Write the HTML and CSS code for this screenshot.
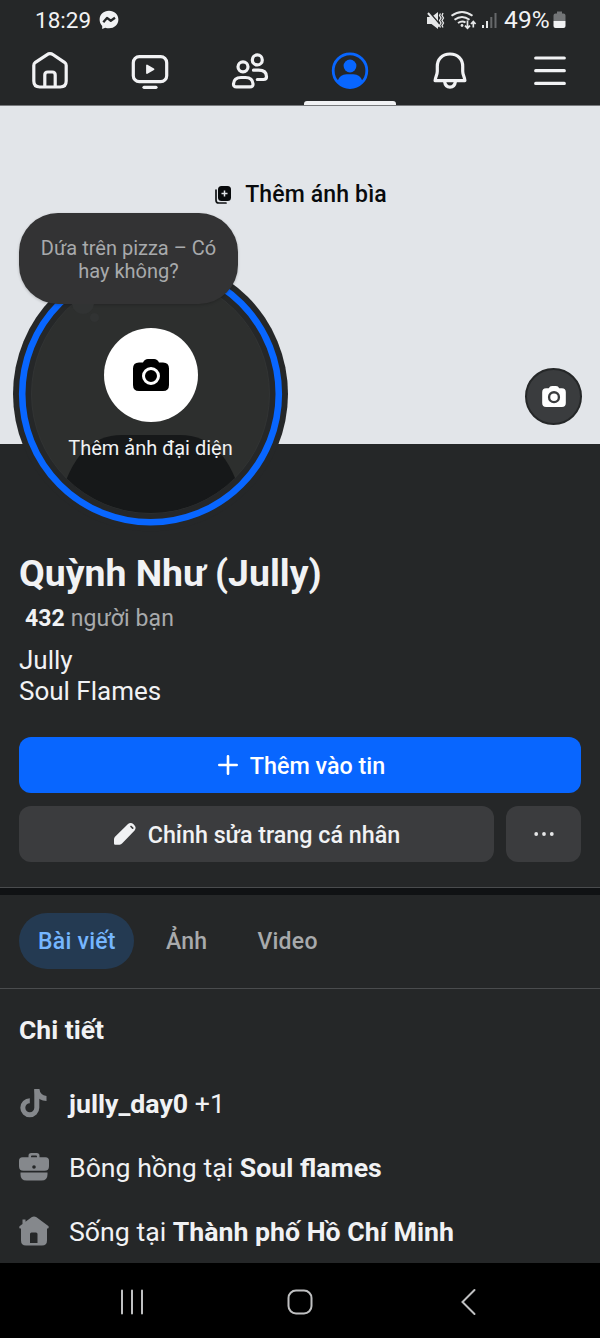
FILE: index.html
```html
<!DOCTYPE html>
<html lang="vi">
<head>
<meta charset="utf-8">
<title>Quỳnh Như (Jully)</title>
<link rel="stylesheet" href="styles.css">
</head>
<body>
<div class="app">
  <header class="top">
    <div class="status">
      <span class="clock">18:29</span>
      <svg class="messenger" width="20" height="20" viewBox="0 0 20 20"><path d="M10 .8C4.600.8.600 4.600.600 9.600c0 2.500.9 4.700 2.600 6.300V19l3-1.300c1.200.4 2.500.6 3.800.6 5.400 0 9.400-3.800 9.400-8.800S15.400.8 10 .8z" fill="#f1f2f4"/><path d="M4.300 12.200 8 7.900l3.800 2.800 4.200-3" fill="none" stroke="#252728" stroke-width="2.300" stroke-linejoin="round"/></svg>
      <span class="grow"></span>
      <svg class="sys" width="72" height="24" viewBox="424 8 72 24" fill="none" stroke="#e6e7e8">
        <path d="M425 17h4.500l6.500-5v17l-6.500-5H425z" fill="#e6e7e8" stroke="none"/>
        <path d="M427.500 12.500l10 11.500" stroke="#252728" stroke-width="1.800"/>
        <path d="M426 13l11.500 13.500" stroke-width="2"/>
        <path d="M438.500 13.500l-1 2 1.500 2.500-1.500 2.500 1.500 2.500-1.500 2.500 1 2M441 13l-1 2.500 1.500 2.500-1.500 2.500 1.500 2.500-1.500 2.500 1 2" stroke-width="1.300"/>
        <path d="M449.500 15.800q10.500-7.500 21 0M452.500 19.700q7.500-5.500 15 0M456 23q4-2.600 7.500-.5" stroke-width="2"/>
        <circle cx="460" cy="25.500" r="1.400" fill="#e6e7e8" stroke="none"/>
        <path d="M465.500 20.500v7.500m-2.500-2.300 2.500 2.500 2.500-2.500M471.300 27.500v-5.500m-2.300 2 2.300-2.500 2.300 2.500" stroke-width="1.700"/>
        <path d="M481 25v3M485 21v7" stroke-width="2"/><path d="M489.300 17v11M493.500 13v15" stroke="#66686a" stroke-width="2"/>
      </svg>
      <span class="percent">49%</span>
      <svg class="battery" width="13" height="18" viewBox="0 0 13 18"><path d="M4 .5h5v2h1.500q2 0 2 2V10H.5V4.500q0-2 2-2H4z" fill="#737577"/><path d="M.5 10h12v5q0 2-2 2h-8q-2 0-2-2z" fill="#f1f2f4"/></svg>
    </div>
    <nav class="nav">
      <a class="nav-item"><svg width="40" height="44" viewBox="30 49 40 44"><path d="M33.800 65.500q0-2 1.600-3.200L46.800 54.800q3.200-2.200 6.400 0L64.500 62.300q1.700 1.200 1.700 3.200V81q0 6-6 6H39.800q-6 0-6-6zM44.800 87V75q0-3 3-3h4.400q3 0 3 3v12"/></svg></a>
      <a class="nav-item"><svg width="40" height="44" viewBox="130 49 40 44"><rect x="133.300" y="56.700" width="33.400" height="25" rx="6"/><path d="M144 87.300h12"/><path d="M147 65.500v7.500l6.500-3.800z" fill="#f1f2f4" stroke-width="1.800"/></svg></a>
      <a class="nav-item"><svg width="40" height="44" viewBox="230 49 40 44"><circle cx="243" cy="66.800" r="5"/><circle cx="257.300" cy="59.900" r="5"/><path d="M241 77.500h4.500q7 0 7.500 6.300.2 3-3 3H236.500q-3.200 0-3-3Q234 77.500 241 77.500zM253.500 70.200h5q8 0 8 6.600 0 2.700-3 2.700h-6.200"/></svg></a>
      <a class="nav-item active"><svg width="40" height="44" viewBox="330 49 40 44"><circle cx="350" cy="70.700" r="16.800" class="blue-line"/><circle cx="350" cy="66" r="6.400" class="blue"/><path class="blue" d="M337.500 81q2.500-6.800 9-6.800h7q6.500 0 9 6.800-5 6.500-12.500 6.500T337.500 81z"/></svg></a>
      <a class="nav-item"><svg width="40" height="44" viewBox="430 49 40 44"><path d="M450 54c-8 0-12.700 5.300-12.700 12.300v5c0 3.500-2 6-2.200 9.300h29.800c-.2-3.300-2.200-5.800-2.200-9.300v-5C462.700 59.300 458 54 450 54z"/><path d="M444.500 81q.8 6.200 5.500 6.200t5.500-6.200"/></svg></a>
      <a class="nav-item"><svg width="40" height="44" viewBox="530 49 40 44"><path d="M535.700 58h28.600M535.700 70.700h28.600M535.700 83.400h28.600"/></svg></a>
    </nav>
  </header>

  <main class="profile">
    <section class="cover">
      <div class="add-cover">
        <svg width="18" height="20" viewBox="0 0 18 20"><path d="M2 5v10.200Q2 18 4.800 18H12" fill="none" stroke="#101214" stroke-width="1.700" stroke-linecap="round"/><rect x="4" y="1" width="13" height="15" rx="3.500" fill="#080a0c"/><path d="M10.500 5.500v6M7.500 8.500h6" stroke="#e2e5e9" stroke-width="1.500"/></svg>
        <span>Thêm ánh bìa</span>
      </div>
      <div class="cover-camera"><svg width="24" height="21" viewBox="0 0 36 32"><path fill="#fff" d="M10 3.500Q11.500 0 15 0h6q3.500 0 5 3.500h4q6 0 6 6V26q0 6-6 6H6q-6 0-6-6V9.500q0-6 6-6z"/><circle cx="18" cy="17" r="7.500" fill="#fff" stroke="#3a3c3e" stroke-width="3.600"/></svg></div>
      <div class="avatar">
        <svg class="ring" width="276" height="276" viewBox="12 256 276 276">
          <defs><clipPath id="photo"><circle cx="150.500" cy="394" r="119"/></clipPath></defs>
          <circle cx="150.500" cy="394" r="137.500" fill="#252728"/>
          <circle cx="150.500" cy="394" r="128.300" fill="none" stroke="#0866ff" stroke-width="6.600"/>
          <circle cx="150.500" cy="394" r="119" fill="#2d2f2e" stroke="#343636" stroke-width=".8"/>
          <path clip-path="url(#photo)" d="M60 500Q76 435 122 435h58q46 0 62 65v20H60z" fill="#161819"/>
        </svg>
        <div class="avatar-content">
          <div class="avatar-camera"><svg width="36" height="32" viewBox="0 0 36 32"><path d="M10 3.500Q11.500 0 15 0h6q3.500 0 5 3.500h4q6 0 6 6V26q0 6-6 6H6q-6 0-6-6V9.500q0-6 6-6z"/><circle cx="18" cy="17" r="7.500" fill="#000" stroke="#fff" stroke-width="3"/></svg></div>
          <span class="avatar-label">Thêm ảnh đại diện</span>
        </div>
      </div>
      <div class="bubble"><span class="l1">Dứa trên pizza – Có</span><span class="l2">hay không?</span><i class="dot big"></i><i class="dot small"></i></div>
    </section>

    <section class="info">
      <h1 class="name"><span>Quỳnh Như (Jully)</span></h1>
      <p class="friends"><b>432</b> <span>người bạn</span></p>
      <p class="bio"><span>Jully</span><br><span>Soul Flames</span></p>
      <div class="actions">
        <div class="btn primary"><svg width="20" height="20" viewBox="0 0 20 20"><path d="M10 1.300v17.400M1.300 10h17.400" stroke="#fff" stroke-width="2.600" stroke-linecap="round"/></svg><span>Thêm vào tin</span></div>
        <div class="row">
          <div class="btn edit"><svg width="24" height="24" viewBox="0 0 24 24"><path fill="#f1f2f4" d="M1 21.500V17.200q0-1.500 1-2.500L15 2q2.700-2.200 5.800.4 3.200 3 .8 6L9.300 21.300q-1.200 1.400-2.700 1.400H2.200Q1 22.700 1 21.500z"/><path d="M18 4.500l1.700 1.700" stroke="#3b3c3e" stroke-width="1.700" stroke-linecap="round"/></svg><span>Chỉnh sửa trang cá nhân</span></div>
          <div class="btn more"><svg width="20" height="4" viewBox="0 0 20 4" fill="#e6e7e8"><circle cx="2.200" cy="2" r="1.900"/><circle cx="10" cy="2" r="1.900"/><circle cx="17.800" cy="2" r="1.900"/></svg></div>
        </div>
      </div>
    </section>

    <div class="divider"></div>

    <div class="tabs">
      <span class="tab selected"><span>Bài viết</span></span>
      <span class="tab photos"><span>Ảnh</span></span>
      <span class="tab"><span>Video</span></span>
    </div>

    <section class="details">
      <h2><span>Chi tiết</span></h2>
      <div class="detail"><svg width="30" height="30" viewBox="0 0 30 30"><path d="M17.500 1v18.500a7 7 0 1 1-7-7" fill="none" stroke="#85888c" stroke-width="5" transform="translate(.3 .3)"/><path d="M15.300 1h5q.8 6 7.200 7v5Q20 12.500 16 7z" fill="#85888c"/></svg><span><b>jully_day0</b> +1</span></div>
      <div class="detail"><svg width="30" height="30" viewBox="0 0 30 30" fill="#85888c"><path d="M9.500 6V3.800Q9.500 1 12.300 1h5.400q2.800 0 2.800 2.800V6h-2.500V4.500q0-1-1-1h-4q-1 0-1 1V6zM3.500 5.200h23q3.500 0 3.500 3.500v5.500q0 4.500-4.500 4.500h-21q-4.500 0-4.500-4.500V8.700q0-3.500 3.500-3.500zM1.500 20.500h27v2q0 6-6 6h-15q-6 0-6-6z"/><circle cx="15" cy="15" r="1.800" fill="#252728"/></svg><span>Bông hồng tại <b>Soul flames</b></span></div>
      <div class="detail"><svg width="30" height="30" viewBox="0 0 30 30"><path fill="#85888c" d="M12.500 1.300q2.500-1.800 5 0L29.300 10q1 1-.2 2.500H28v12q0 5-5 5H7q-5 0-5-5v-12H.8Q-.3 11 .8 10.100L3.500 8V3.500h3V5.700zM11 27h7.500v-9q0-1.500-1.500-1.500h-4.500Q11 16.500 11 18z" fill-rule="evenodd"/></svg><span>Sống tại <b>Thành phố Hồ Chí Minh</b></span></div>
    </section>
  </main>

  <footer class="system-nav">
    <svg width="28" height="28" viewBox="0 0 28 28"><path d="M4 2.500v23M14 2.500v23M24 2.500v23"/></svg>
    <svg width="28" height="28" viewBox="0 0 28 28"><rect x="2.500" y="2.500" width="23" height="23" rx="7.500"/></svg>
    <svg width="28" height="28" viewBox="0 0 28 28"><path d="M20.500 2 8.500 14l12 12"/></svg>
  </footer>
</div>
</body>
</html>
```
FILE: styles.css
```css
* { box-sizing: border-box; }
body { margin: 0; background: #252728; color: #f1f2f4; font-family: Roboto, "Noto Sans", sans-serif; }
h1, h2, p { margin: 0; }
svg { display: block; flex: none; }
.app { width: 600px; height: 1338px; display: flex; flex-direction: column; overflow: hidden; white-space: nowrap; }

.top { height: 106px; flex: none; border-bottom: 1px solid #77797c; }
.status { display: flex; align-items: center; height: 40px; padding: 0 34px 0 35px; font-size: 22.500px; line-height: 40px; }
.messenger { margin-left: 8px; }
.grow { flex: 1; }
.percent { margin-left: 6px; font-size: 24.500px; letter-spacing: .2px; }
.battery { margin-left: 3px; }
.nav { display: grid; grid-template-columns: repeat(6, 100px); height: 65px; }
.nav-item { display: flex; flex-direction: column; align-items: center; padding-top: 9px; }
.nav-item svg { fill: none; stroke: #f1f2f4; stroke-width: 3.200; stroke-linecap: round; stroke-linejoin: round; }
.nav-item .blue { fill: #0866ff; stroke: none; }
.nav-item .blue-line { stroke: #0866ff; stroke-width: 2.800; }
.active::after { content: ""; width: 92px; height: 4px; margin-top: 8px; border-radius: 3px 3px 0 0; background: #f1f2f4; }

.cover { position: relative; height: 338px; background: #e2e5e9; }
.add-cover { display: flex; align-items: center; justify-content: center; gap: 13px; padding: 72px 0 0 1px; color: #080a0c; font-size: 23px; letter-spacing: .15px; font-weight: 500; line-height: 32px; }
.add-cover span { padding-top: 1px; }
.cover-camera { position: absolute; right: 18px; bottom: 19px; width: 57px; height: 57px; display: flex; align-items: center; justify-content: center; border: 2px solid #252728; border-radius: 50%; background: #3a3c3e; }
.avatar { position: absolute; left: 12px; top: 150px; width: 276px; height: 276px; display: grid; }
.ring, .avatar-content { grid-area: 1 / 1; }
.avatar-content { display: flex; flex-direction: column; align-items: center; padding: 71.500px 0 0 1px; }
.avatar-camera { width: 94px; height: 94px; display: flex; align-items: center; justify-content: center; border-radius: 50%; background: #fff; }
.avatar-label { margin-top: 11px; font-size: 20px; line-height: 30px; }
.bubble { position: absolute; left: 19px; top: 107px; width: 219px; height: 91px; padding-top: 24px; display: flex; flex-direction: column; align-items: center; border-radius: 39px; background: #333334; color: #a8aaac; font-size: 20px; line-height: 23px; box-shadow: 0 1px 3px rgba(0, 0, 0, .2); }
.dot { position: absolute; border-radius: 50%; background: #313333; }
.big { left: 53px; top: 79px; width: 22px; height: 22px; clip-path: inset(12px 0 0 0); }
.small { left: 71px; top: 100px; width: 9px; height: 9px; }

.info { height: 443px; padding: 107px 19px 0; }
.name { font-size: 37.400px; line-height: 44px; font-weight: 700; }
.friends { margin-top: 8px; padding-left: 6px; font-size: 23px; letter-spacing: .1px; line-height: 32px; color: #a8aaac; }
.friends b { color: #f1f2f4; }
.bio { margin-top: 10px; font-size: 26px; line-height: 30.500px; }
.actions { display: flex; flex-direction: column; gap: 13px; margin-top: 31px; }
.row { display: flex; gap: 12px; }
.btn { height: 56px; display: flex; align-items: center; justify-content: center; border-radius: 12px; background: #3b3c3e; font-size: 23.300px; font-weight: 500; }
.btn span { padding-top: 2px; }
.primary { gap: 12px; padding-left: 3px; background: #0866ff; color: #fff; }
.edit { flex: 1; gap: 11px; }
.more { width: 75px; }

.divider { height: 8px; border-top: 1px solid #4a4c4e; background: #101214; }
.tabs { display: flex; height: 94px; padding: 18px 19px 0; border-bottom: 1px solid #4a4c4e; font-size: 23px; letter-spacing: .25px; font-weight: 500; color: #a8aaac; }
.tab { display: flex; align-items: center; height: 56px; padding: 1px 19px 0; }
.selected { border-radius: 28px; background: #243a52; color: #75b6ff; width: 115px; padding-right: 0; margin-right: 13px; }
.photos { margin-right: 12px; }

.details { padding: 24px 19px 0; }
.details h2 { font-size: 26.500px; line-height: 34px; font-weight: 700; margin-bottom: 24px; }
.detail { display: flex; align-items: center; gap: 20px; height: 64px; font-size: 26.700px; }
.detail span { padding-top: 2px; }
.friends b, .detail b { font-weight: 700; }
.profile { flex: 1; min-height: 0; overflow: hidden; }
.system-nav { flex: none; height: 75px; display: flex; justify-content: space-between; align-items: center; padding: 3px 118px 0; background: #000; }
.system-nav svg { fill: none; stroke: #bfc0c1; stroke-width: 2; stroke-linecap: round; }
```
